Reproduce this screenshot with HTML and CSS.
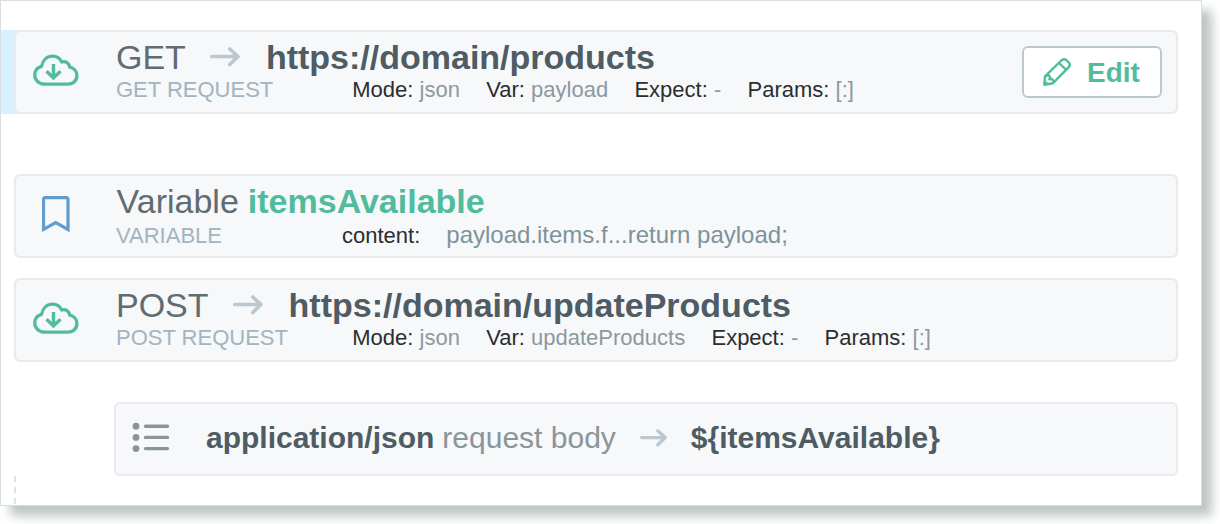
FILE: index.html
```html
<!DOCTYPE html>
<html lang="en">
<head>
<meta charset="utf-8">
<title>Test composer</title>
<link rel="stylesheet" href="styles.css">
</head>
<body>
<svg width="0" height="0" class="defs" aria-hidden="true">
  <symbol id="arrow" viewBox="0 0 30 20"><path d="M1.800 9.500H28M19.800 2L28 9.500L19.800 17.500" fill="none" stroke="currentColor" stroke-width="3.700" stroke-linecap="round" stroke-linejoin="round"/></symbol>
  <symbol id="cloud" viewBox="0 0 46 32">
    <path d="M11.500 30.200C6 30.200 1.700 26.200 1.700 20.800C1.700 16.600 4.600 13.400 8.600 12.300C9.700 6 14 2.200 19.600 2.200C23.900 2.200 27.100 4.500 28.700 8C32.700 6.600 36.400 9.300 36.700 13.200C40.900 14 43.900 17.200 43.900 21.400C43.900 26.500 40.200 30.200 35 30.200Z" fill="none" stroke="currentColor" stroke-width="3.300" stroke-linejoin="round"/>
    <path d="M20.500 10V23M13.500 17.200L20.500 24L27.500 17.200" fill="none" stroke="currentColor" stroke-width="3.400"/>
  </symbol>
</svg>
<main class="panel">
  <section class="step selected">
    <article class="card">
      <div class="icon"><svg class="cloud" width="46" height="32"><use href="#cloud"/></svg></div>
      <div class="body">
        <div class="title"><span>GET</span><svg class="arrow" width="30" height="20"><use href="#arrow"/></svg><b>https://domain/products</b></div>
        <div class="meta"><span class="kind">GET REQUEST</span>
          <span class="pair">Mode: <i>json</i></span><span class="pair">Var: <i>payload</i></span><span class="pair">Expect: <i>-</i></span><span class="pair">Params: <i>[:]</i></span></div>
      </div>
      <button class="edit"><svg width="28" height="28" viewBox="0 0 28 28" fill="none" stroke="currentColor" stroke-width="2.400" stroke-linejoin="round"><path d="M1.300 26.700L2 18.300L18.300 2.500Q21 .1 23.600 2.400L25.700 4.500Q27.900 6.900 25.600 9.300L9.700 25.300ZM16 5L23 11.700M2.200 18.300L5.600 17.200L7.100 19.300L6.400 21.400L8.700 20.900L10.400 22.700L9.700 25.300"/><path d="M1.300 26.700L1.800 22L6 26Z" fill="currentColor" stroke="none"/></svg><span>Edit</span></button>
    </article>
  </section>
  <section class="step variable">
    <article class="card">
      <div class="icon"><svg class="bookmark" width="28" height="37" viewBox="0 0 28 37"><path d="M1.500 33.400V3.500Q1.500 1.600 3.400 1.600H24.100Q26 1.600 26 3.500V33.400L13.750 26.500Z" fill="none" stroke="currentColor" stroke-width="3.200"/></svg></div>
      <div class="body">
        <div class="title"><span>Variable</span><b class="name">itemsAvailable</b></div>
        <div class="meta"><span class="kind">VARIABLE</span><span class="pair">content:</span><span class="value">payload.items.f...return payload;</span></div>
      </div>
    </article>
  </section>
  <section class="step post">
    <article class="card">
      <div class="icon"><svg class="cloud" width="46" height="32"><use href="#cloud"/></svg></div>
      <div class="body">
        <div class="title"><span>POST</span><svg class="arrow" width="30" height="20"><use href="#arrow"/></svg><b>https://domain/updateProducts</b></div>
        <div class="meta"><span class="kind">POST REQUEST</span>
          <span class="pair">Mode: <i>json</i></span><span class="pair">Var: <i>updateProducts</i></span><span class="pair">Expect: <i>-</i></span><span class="pair">Params: <i>[:]</i></span></div>
      </div>
    </article>
  </section>
  <section class="step nested">
    <article class="card small">
      <svg class="list" width="38" height="31" viewBox="0 0 38 31" fill="currentColor"><circle cx="4" cy="4.200" r="3.400"/><circle cx="4" cy="15.400" r="3.400"/><circle cx="4" cy="26.600" r="3.400"/><path d="M13.500 4.200H35.500M13.500 15.400H35.500M13.500 26.600H35.500" stroke="currentColor" stroke-width="3.400" stroke-linecap="round"/></svg>
      <b>application/json</b><span class="label">request body</span><svg class="arrow" width="27" height="18"><use href="#arrow"/></svg><b>${itemsAvailable}</b>
    </article>
  </section>
  <div class="trail"></div>
</main>
</body>
</html>
```
FILE: styles.css
```css
* { box-sizing: border-box; }

body {
  margin: 0;
  height: 524px;
  overflow: hidden;
  background: #fff;
  color: #4f5c63;
  font-family: "Liberation Sans", Arial, Helvetica, sans-serif;
}

.defs { display: none; }

.panel {
  width: 1202px;
  height: 506px;
  padding-top: 29px;
  display: flex;
  flex-direction: column;
  border: 1px solid #d9dddd;
  background: #fff;
  box-shadow: 10px 10px 10px #bec5c5;
}

.step { padding: 0 23px 0 13px; }
.selected { background: linear-gradient(to right, #d6f0fd 18px, transparent 18px); }
.variable { margin-top: 60px; }
.post { margin-top: 20px; }
.nested { margin-top: 40px; padding-left: 113px; }

.card {
  height: 84px;
  display: flex;
  border: 2px solid #e8eaef;
  border-radius: 6px;
  background: #f6f8fa;
  white-space: nowrap;
}

.icon { width: 100px; flex: none; }
.icon svg { display: block; }
.cloud { margin: 22px 0 0 17px; color: #51bc9d; }
.bookmark { margin: 20px 0 0 26px; color: #629bcf; }

.body { flex: 1; padding-top: 8px; }

.title {
  display: flex;
  height: 34px;
  font-size: 34px;
  line-height: 34px;
  color: #606c70;
}
.title b { color: #4f5c63; }
.title .name { margin-left: 9px; color: #51bc9d; }
.variable .title { padding-left: 0.6px; }
.title .arrow { margin: 7px 25.5px 0 24.5px; }
.arrow { flex: none; color: #bcc8cf; }

.meta {
  display: flex;
  gap: 26.3px;
  padding-top: 4px;
  font-size: 22px;
  line-height: 24px;
  color: #2b2d2f;
}
.meta i { font-style: normal; color: #8d999d; }
.kind { width: 210px; color: #a3b4c1; }
.variable .meta { gap: 26px; padding-top: 6px; }
.variable .kind { width: 200px; }
.value { margin-top: -1px; font-size: 24px; color: #7d939c; }

.edit {
  width: 140px;
  height: 52px;
  margin: 14px 14px 0 0;
  padding: 0 0 0 19px;
  display: flex;
  align-items: center;
  gap: 16px;
  border: 2px solid #bcc8cf;
  border-radius: 6px;
  background: #fff;
  color: #51bc9d;
  font: bold 28px/30px "Liberation Sans", Arial, sans-serif;
}
.edit span { padding-top: 2px; }

.small {
  height: 74px;
  align-items: center;
  padding-bottom: 3px;
  font-size: 30px;
  line-height: 34px;
}
.list { margin: 0 36px 0 16px; color: #8a9599; }
.label { margin-left: 8px; color: #8a9599; }
.small .arrow { margin: 0 24px 0 24px; }

.trail {
  height: 28px;
  width: 2px;
  margin-left: 13px;
  background: repeating-linear-gradient(to bottom, #d7e5ef 0 6px, transparent 6px 10.8px);
}
```
